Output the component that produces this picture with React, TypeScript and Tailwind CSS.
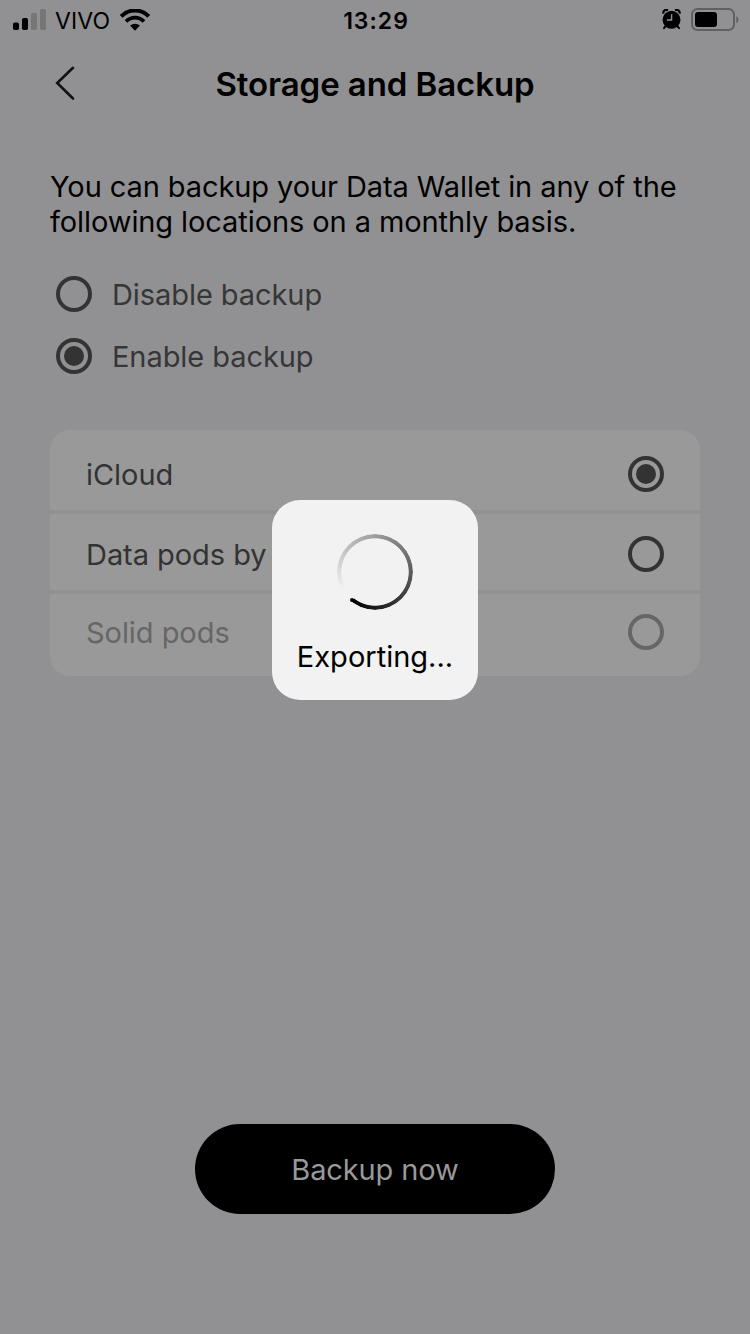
import React from "react";

function Radio({ checked = false, color = "#333333" }: { checked?: boolean; color?: string }) {
  return (
    <svg className="size-9 shrink-0" viewBox="0 0 36 36" fill="none">
      <circle cx="18" cy="18" r="16" stroke={color} strokeWidth="4" />
      {checked && <circle cx="18" cy="18" r="10" fill={color} />}
    </svg>
  );
}

function StatusBar() {
  return (
    <div className="grid h-10 grid-cols-[1fr_auto_1fr] items-center pr-[11px] pl-[13px]">
      <div className="flex items-center">
        <svg className="h-[22px] w-[33px]" viewBox="0 0 33 22">
          <rect x="0" y="13.5" width="6" height="7.5" rx="1.8" />
          <rect x="9" y="9" width="6" height="12" rx="1.8" />
          <rect x="18" y="4" width="6" height="17" rx="1.8" fill="#767677" />
          <rect x="27" y="0" width="6" height="21" rx="1.8" fill="#767677" />
        </svg>
        <span className="ml-[9px] pt-0.5 text-[23px] leading-[38px] tracking-[0.1px]">VIVO</span>
        <svg className="ml-[10px] h-[22px] w-[30px]" viewBox="0 0 30 22" fill="none" stroke="#000">
          <path d="M1.2 7.3 A19.2 19.2 0 0 1 28.8 7.3" strokeWidth="4" />
          <path d="M6.1 12.6 A12 12 0 0 1 23.9 12.6" strokeWidth="3.8" />
          <path d="M10 16.6 Q15 12.8 20 16.6 L15 21.8 Z" fill="#000" stroke="none" />
        </svg>
      </div>
      <span className="pt-0.5 text-[23px] leading-[38px] font-semibold tracking-[1px]">13:29</span>
      <div className="flex items-center justify-end pb-px">
        <svg className="h-[21px] w-[19px]" viewBox="0 0 19 21" fill="none">
          <circle cx="9.5" cy="10.8" r="9" fill="#000" />
          <path d="M1.3 4.6 A3.2 3.2 0 0 1 5.9 1.2 M13.1 1.2 A3.2 3.2 0 0 1 17.7 4.6" stroke="#000" strokeWidth="2.2" />
          <path d="M3.8 16.8 L2 19.2 M15.2 16.8 L17 19.2" stroke="#000" strokeWidth="2" strokeLinecap="round" />
          <path d="M9.6 5.2 V11 H4.9" stroke="#919193" strokeWidth="1.4" />
        </svg>
        <svg className="ml-[10px] h-[23px] w-[48px]" viewBox="0 0 48 23" fill="none">
          <rect x="1" y="1" width="42" height="21" rx="5.5" stroke="#606062" strokeWidth="2" />
          <rect x="4" y="4" width="22" height="15" rx="3" fill="#000" />
          <path d="M45.3 8 Q47.5 9 47.5 11.5 Q47.5 14 45.3 15 Z" fill="#606062" />
        </svg>
      </div>
    </div>
  );
}

function Header() {
  return (
    <header className="grid h-[88px] grid-cols-[1fr_auto_1fr] items-center">
      <svg className="ml-[55px] h-9 w-5" viewBox="0 0 20 36" fill="none" stroke="#111" strokeWidth="2.6">
        <path d="M18 1.8 L2.2 17 L18 32.5" strokeLinecap="round" />
      </svg>
      <h1 className="text-[33px] leading-[42px] font-semibold tracking-[-0.08px]">Storage and Backup</h1>
      <span />
    </header>
  );
}

function ExportingDialog() {
  return (
    <div className="absolute inset-0 flex items-start justify-center pt-[500px]">
      <div className="flex h-[200px] w-[206px] flex-col items-center rounded-[28px] bg-[#f2f2f2] pt-[34px]">
        <div className="relative size-[76px]">
          <div className="size-full rounded-full bg-[conic-gradient(from_219deg,transparent_0deg_22deg,#f2f2f2_22deg,#000_360deg)] [mask-image:radial-gradient(circle_at_center,transparent_33.3px,#000_34.1px,#000_38px)]" />
          <span className="absolute top-[63.5px] left-[12.5px] size-1 rounded-full bg-black" />
        </div>
        <p className="mt-[27px] text-[29px] leading-10 tracking-[0px] whitespace-nowrap">Exporting...</p>
      </div>
    </div>
  );
}

export default function App() {
  return (
    <div className="relative flex h-[1334px] w-[750px] flex-col overflow-hidden bg-[#919193] font-['Inter','Liberation_Sans',sans-serif] text-black">
      <StatusBar />
      <Header />
      <main className="flex flex-1 flex-col px-[50px] pt-[41px]">
        <p className="text-[29px] leading-[35px] tracking-[-0.09px] whitespace-nowrap">
          You can backup your Data Wallet in any of the
          <br />
          following locations on a monthly basis.
        </p>
        <div className="mt-6 flex flex-col pl-1.5 text-[29px] tracking-[-0.07px] text-[#363637]">
          <div className="flex h-[62px] items-center gap-5">
            <Radio />
            <span className="pt-px">Disable backup</span>
          </div>
          <div className="flex h-[62px] items-center gap-5">
            <Radio checked />
            <span className="pt-px">Enable backup</span>
          </div>
        </div>
        <div className="mt-[43px] flex flex-col gap-1 overflow-hidden rounded-[20px] text-[29px] tracking-[-0.05px] text-[#333]">
          <div className="flex h-20 items-center justify-between bg-[#999] px-9 pt-2">
            <span className="pt-px">iCloud</span>
            <Radio checked />
          </div>
          <div className="flex h-[76px] items-center justify-between bg-[#999] px-9 pt-1">
            <span className="pt-px">Data pods by</span>
            <Radio />
          </div>
          <div className="flex h-[82px] items-center justify-between bg-[#999] px-9 pb-1.5 text-[#666]">
            <span className="pt-px">Solid pods</span>
            <Radio color="#666666" />
          </div>
        </div>
        <button className="mt-auto mb-[120px] h-[90px] w-[360px] self-center rounded-full bg-black pt-0.5 text-[29px] tracking-[-0.12px] text-[#999]">
          Backup now
        </button>
      </main>
      <ExportingDialog />
    </div>
  );
}
